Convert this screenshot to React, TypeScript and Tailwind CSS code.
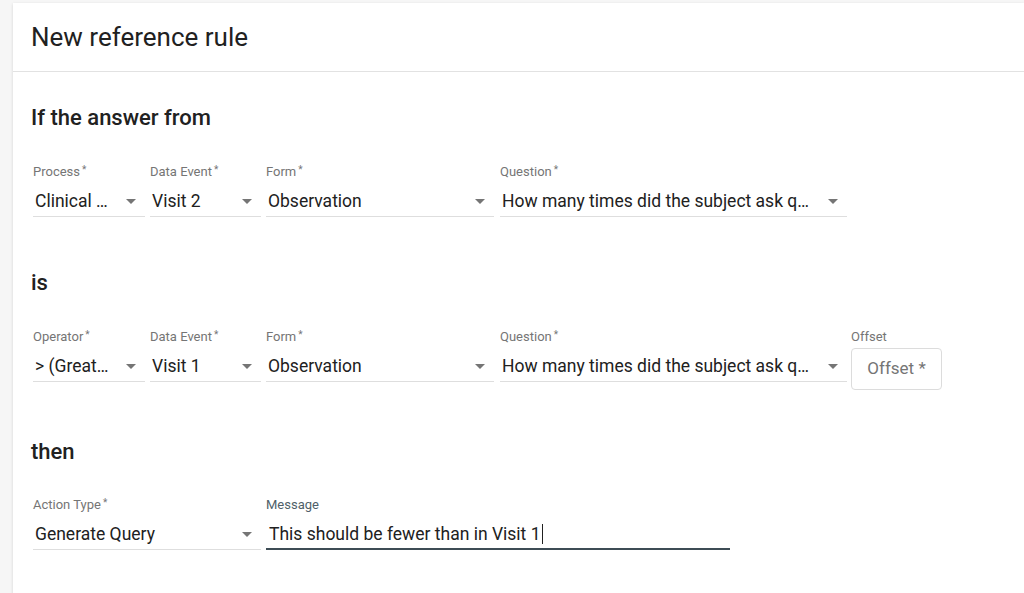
import type React from "react"

interface SelectFieldProps {
  label: string
  value: string
  width: string
  required?: boolean
}

function Asterisk() {
  return <span className="ml-[2px] align-top text-[10px] leading-[12px]">*</span>
}

function Arrow() {
  return (
    <svg width="10" height="5" viewBox="0 0 10 5" className="shrink-0">
      <path d="M0 0 L10 0 L5 5 Z" fill="#757575" />
    </svg>
  )
}

function SelectField({ label, value, width, required = true }: SelectFieldProps) {
  return (
    <div className={`${width} shrink-0`}>
      <div className="h-4 text-[13px] leading-4 text-[#757575]">
        {label}
        {required && <Asterisk />}
      </div>
      <div className="flex h-[37px] items-end border-b border-[#dedede] pb-[3px]">
        <div className="flex h-6 w-full items-center">
          <span className="flex-1 truncate pl-[2px] text-[17.5px] leading-6 text-[#212121]">{value}</span>
          <span className="mr-[9px] ml-1 flex items-center">
            <Arrow />
          </span>
        </div>
      </div>
    </div>
  )
}

function SectionTitle({ children, className }: { children: React.ReactNode; className: string }) {
  return <h2 className={`text-[22px] leading-6 font-medium text-[#212121] ${className}`}>{children}</h2>
}

export default function App() {
  return (
    <div className="h-[593px] overflow-hidden bg-[#f6f6f6] pt-[3px] pl-[13px] font-['Roboto',sans-serif]">
      <div className="h-[600px] bg-white shadow-[0_1px_3px_rgba(0,0,0,0.14)]">
        <div className="flex h-[69px] items-center border-b border-[#e2e2e2] px-[18px]">
          <h1 className="text-[26px] leading-8 font-normal text-[#212121]">New reference rule</h1>
        </div>

        <div className="px-[18px]">
          <SectionTitle className="pt-[34px]">If the answer from</SectionTitle>
          <div className="mt-[34px] ml-[2px] flex items-start gap-[5px]">
            <SelectField label="Process" value="Clinical …" width="w-[112px]" />
            <SelectField label="Data Event" value="Visit 2" width="w-[111px]" />
            <SelectField label="Form" value="Observation" width="w-[228px]" />
            <SelectField label="Question" value="How many times did the subject ask q…" width="w-[347px] ml-px" />
          </div>

          <SectionTitle className="mt-[54px]">is</SectionTitle>
          <div className="mt-[34px] ml-[2px] flex items-start gap-[5px]">
            <SelectField label="Operator" value="> (Great…" width="w-[112px]" />
            <SelectField label="Data Event" value="Visit 1" width="w-[111px]" />
            <SelectField label="Form" value="Observation" width="w-[228px]" />
            <SelectField label="Question" value="How many times did the subject ask q…" width="w-[347px] ml-px" />
            <div className="w-[91px] shrink-0 -ml-px">
              <div className="h-4 text-[13px] leading-4 text-[#757575]">Offset</div>
              <div className="mt-[3px] flex h-[42px] items-center justify-center rounded-[4px] border border-[#dcdcdc] text-[17px] text-[#757575]">
                Offset *
              </div>
            </div>
          </div>

          <SectionTitle className="mt-[50px]">then</SectionTitle>
          <div className="mt-[33px] ml-[2px] flex items-start gap-[5px]">
            <SelectField label="Action Type" value="Generate Query" width="w-[228px]" />
            <div className="w-[464px] shrink-0">
              <div className="h-4 text-[13px] leading-4 text-[#4f5f69]">Message</div>
              <div className="flex h-[37px] items-end border-b-2 border-[#3d4c55] pb-[2px]">
                <div className="flex h-6 items-center pl-[3px] text-[17.5px] leading-6 text-[#212121]">
                  This should be fewer than in Visit 1
                  <span className="ml-px inline-block h-[20px] w-px bg-[#212121]" />
                </div>
              </div>
            </div>
          </div>
        </div>
      </div>
    </div>
  )
}
